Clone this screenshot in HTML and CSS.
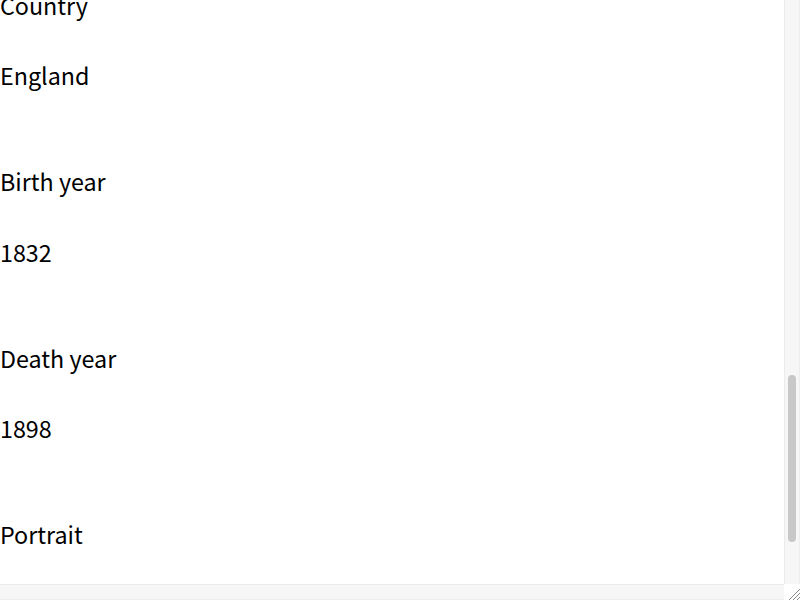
FILE: index.html
```html
<!DOCTYPE html>
<html lang="en">
<head>
    <meta charset="UTF-8">
    <meta name="viewport" content="width=device-width, initial-scale=1.0">
    <title>Author record</title>
    <link rel="stylesheet" href="styles.css">
</head>
<body>
    <div class="frame">
        <div class="record" id="record">
            <div class="field">
                <div class="field-label">Name</div>
                <div class="field-value">Lewis Carroll</div>
            </div>
            <div class="field">
                <div class="field-label">Real name</div>
                <div class="field-value">Charles Lutwidge Dodgson</div>
            </div>
            <div class="field">
                <div class="field-label">Occupation</div>
                <div class="field-value">Writer, mathematician</div>
            </div>
            <div class="field">
                <div class="field-label">Genre</div>
                <div class="field-value">Children's literature</div>
            </div>
            <div class="field">
                <div class="field-label">Notable work</div>
                <div class="field-value">Alice's Adventures in Wonderland</div>
            </div>
            <div class="field">
                <div class="field-label">Language</div>
                <div class="field-value">English</div>
            </div>
            <div class="field">
                <div class="field-label">Nationality</div>
                <div class="field-value">British</div>
            </div>
            <div class="field">
                <div class="field-label">Country</div>
                <div class="field-value">England</div>
            </div>
            <div class="field">
                <div class="field-label">Birth year</div>
                <div class="field-value">1832</div>
            </div>
            <div class="field">
                <div class="field-label">Death year</div>
                <div class="field-value">1898</div>
            </div>
            <div class="field field-last">
                <div class="field-label">Portrait</div>
                <svg class="portrait" width="110" height="144" viewBox="0 0 110 144">
                    <rect width="110" height="144" fill="#e8e8e8"/>
                    <circle cx="55" cy="54" r="24" fill="#bdbdbd"/>
                    <path d="M15 144 C20 104 40 88 55 88 C70 88 90 104 95 144 Z" fill="#bdbdbd"/>
                </svg>
            </div>
        </div>

        <!-- scrollbars -->
        <div class="track track-v">
            <div class="thumb" id="thumb"></div>
        </div>
        <div class="track track-h"></div>
        <div class="corner">
            <svg width="16" height="16" viewBox="0 0 16 16">
                <path d="M5 16 L16 5 M9 16 L16 9 M13 16 L16 13" stroke="#8a8a8a" stroke-width="1"/>
            </svg>
        </div>
    </div>

    <script>
        // open the record scrolled down to the dates
        const record = document.getElementById('record');
        const thumb = document.getElementById('thumb');
        record.scrollTop = 1318;

        const trackLen = record.clientHeight;
        const size = record.clientHeight / record.scrollHeight * trackLen;
        const room = record.scrollHeight - record.clientHeight;
        thumb.style.height = size + 'px';
        thumb.style.marginTop = (record.scrollTop / room * (trackLen - size)) + 'px';
    </script>
</body>
</html>
```

FILE: styles.css
```css
body {
    margin: 0;
    padding: 0;
    background-color: #ffffff;
    color: #000;
    font-family: "Noto Sans CJK JP", sans-serif;
}
.frame {
    display: grid;
    grid-template-columns: 784px 16px;
    grid-template-rows: 584px 16px;
    width: 800px;
    height: 600px;
}
.record {
    overflow: hidden;
    padding-top: 70px;
    box-sizing: border-box;
    font-size: 23.3px;
    line-height: 34px;
}
.field {
    display: flex;
    flex-direction: column;
    align-items: flex-start;
    gap: 36.5px;
    margin-bottom: 72px;
}
.field-last {
    margin-bottom: 0;
}
.portrait {
    display: block;
}
.track {
    background-color: #f6f6f6;
    box-sizing: border-box;
}
.track-v {
    border-left: 1px solid #ebebeb;
    border-right: 1px solid #ededed;
    padding-left: 3px;
}
.track-h {
    border-top: 1px solid #ebebeb;
    border-bottom: 1px solid #ededed;
}
.thumb {
    width: 8px;
    height: 167px;
    margin-top: 376px;
    border-radius: 4px;
    background-color: #c8c8c8;
}
.corner {
    background-color: #ffffff;
}
.corner svg {
    display: block;
}
```
